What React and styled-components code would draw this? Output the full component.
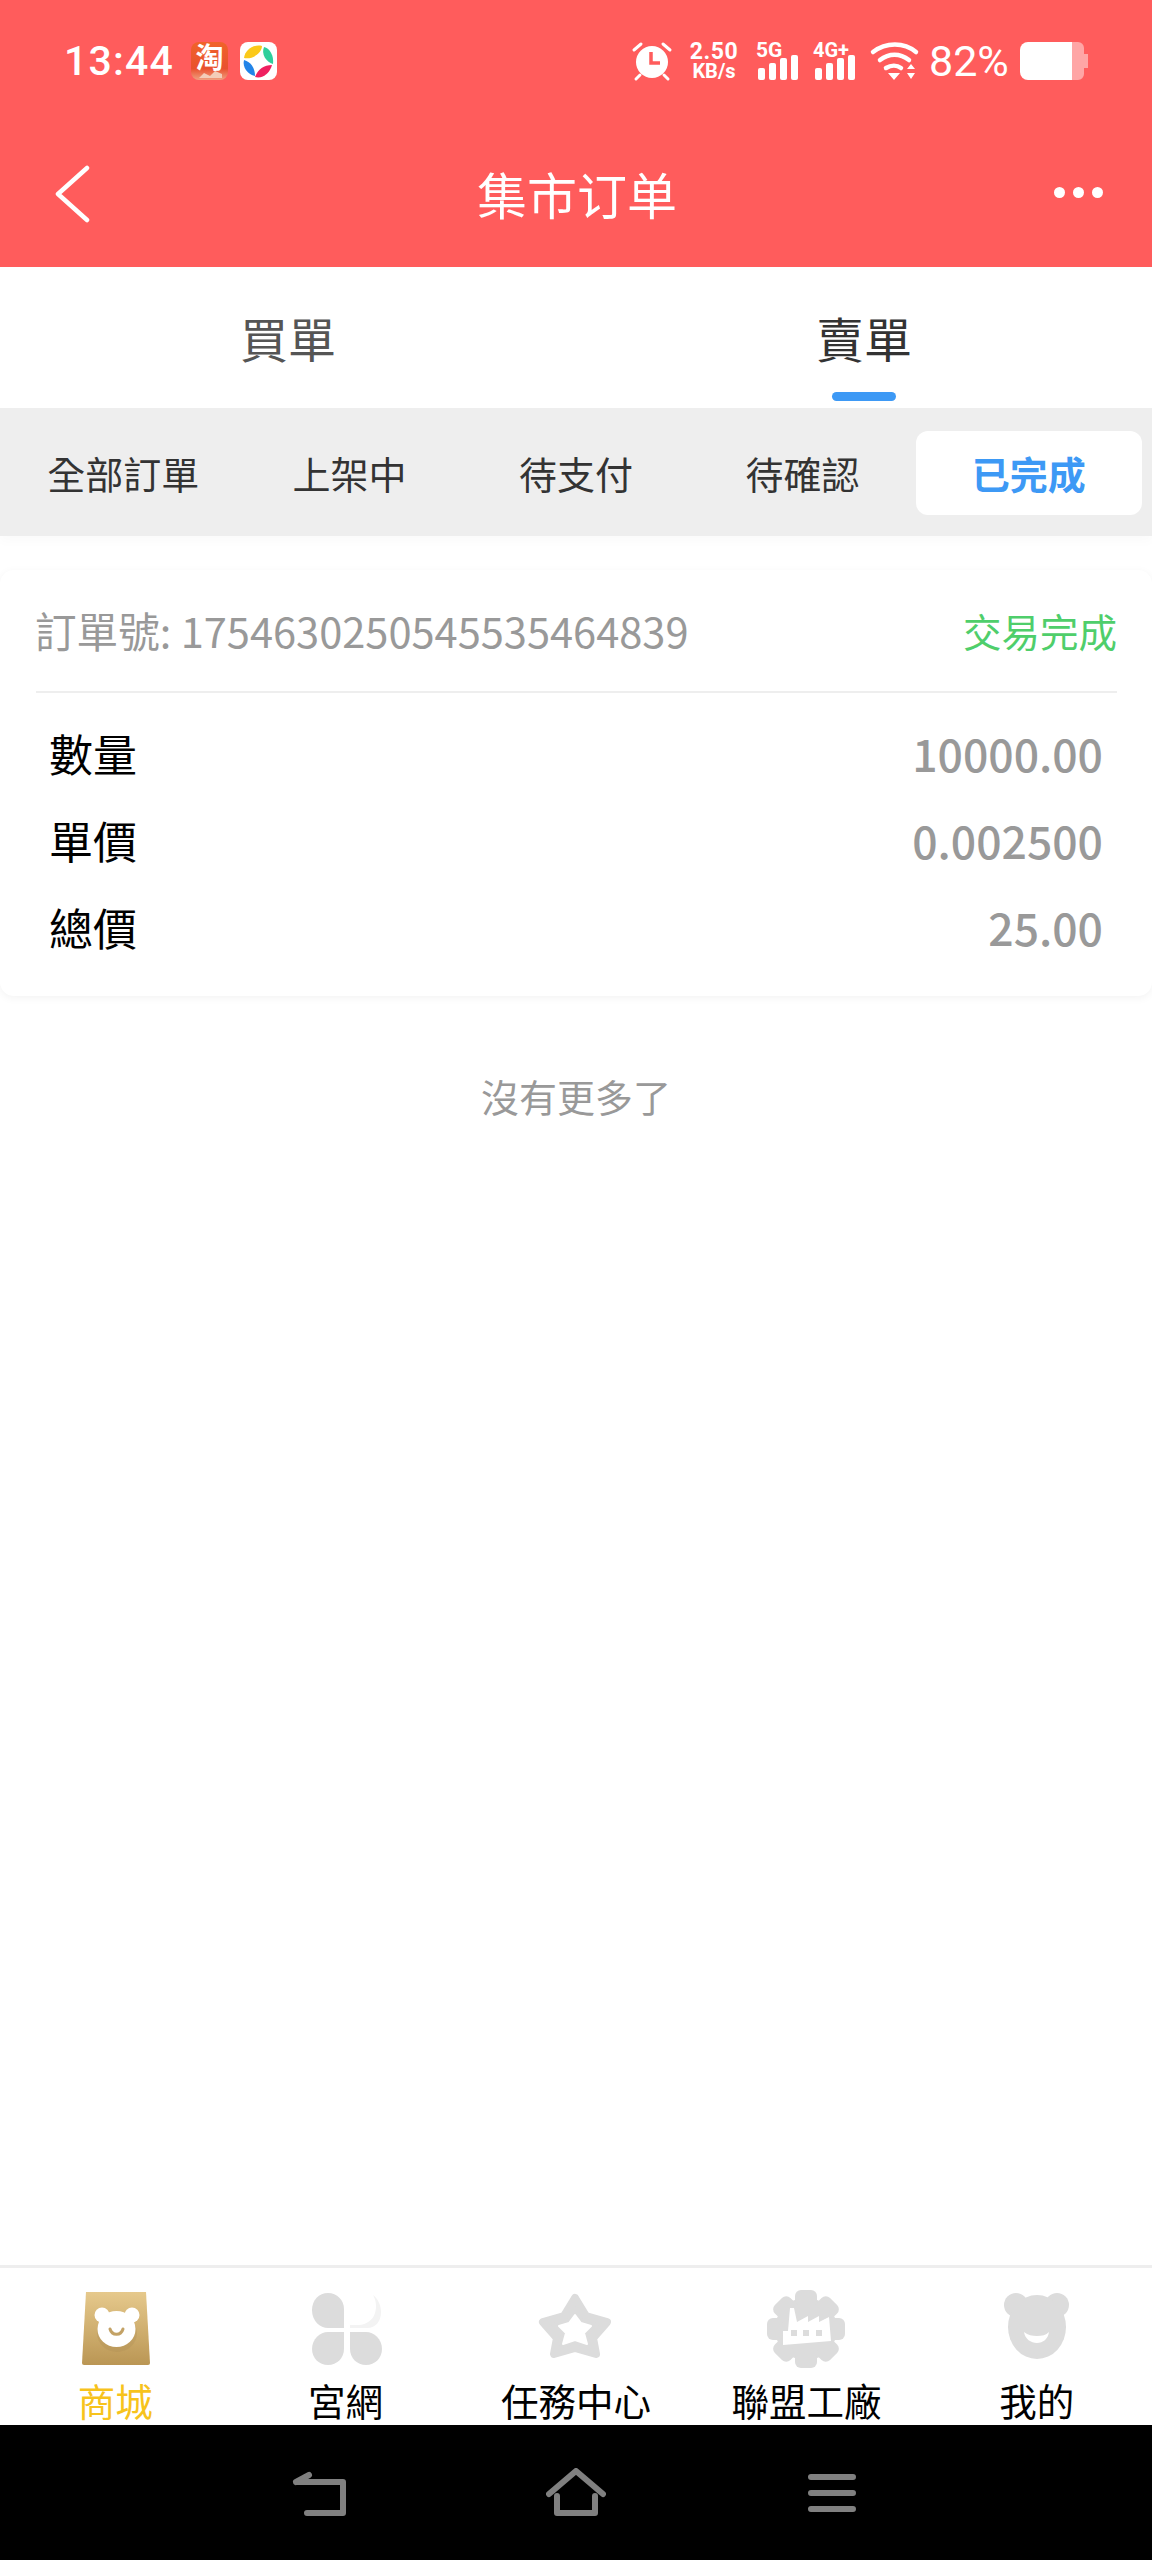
import React from 'react';
import styled, { createGlobalStyle } from 'styled-components';

const GlobalStyle = createGlobalStyle`
    html, body {
        margin: 0;
        padding: 0;
        background: #fff;
    }
    body {
        font-family: "Noto Sans CJK TC", "Noto Sans", sans-serif;
    }
`

const Page = styled.div`
    width: 1152px;
    height: 2560px;
    display: flex;
    flex-direction: column;
    overflow: hidden;
    background: #fff;
`
const Header = styled.header`
    height: 267px;
    background: #ff5c5c;
    color: #fff;
    flex: none;
`
const StatusBar = styled.div`
    height: 123px;
    box-sizing: border-box;
    padding: 42px 64px 0;
    display: flex;
    justify-content: space-between;
    align-items: flex-start;
`
const StatusLeft = styled.div`
    display: flex;
    align-items: center;
    height: 38px;
`
const StatusRight = styled.div`
    display: flex;
    align-items: center;
    height: 38px;
`
const Time = styled.span`
    font-family: Roboto, sans-serif;
    font-size: 41px;
    font-weight: 500;
    line-height: 38px;
    letter-spacing: 1.2px;
    white-space: nowrap;
    margin-right: 17px;
`
const AppIcon = styled.svg`
    width: 37px;
    height: 38px;
    margin-right: ${p => p.$gap || 0}px;
    display: block;
    overflow: visible;
`
const StatusIcon = styled.svg`
    width: ${p => p.$w}px;
    height: 38px;
    margin-left: ${p => p.$ml || 0}px;
    display: block;
    flex: none;
    overflow: visible;
`
const Speed = styled.div`
    width: 50px;
    margin-left: 17px;
    display: flex;
    flex-direction: column;
    align-items: center;
    font-family: Roboto, sans-serif;
    font-weight: 700;
`
const SpeedValue = styled.span`
    font-size: 23px;
    line-height: 21px;
    letter-spacing: 0.5px;
`
const SpeedUnit = styled.span`
    font-size: 20px;
    line-height: 19px;
`
const Battery = styled.span`
    font-family: Roboto, sans-serif;
    font-size: 43px;
    line-height: 38px;
    margin-left: 9px;
    width: 91px;
    white-space: nowrap;
`
const TopBar = styled.div`
    height: 144px;
    display: grid;
    grid-template-columns: 1fr auto 1fr;
    align-items: center;
    padding: 0 49px 0 54px;
`
const BackIcon = styled.svg`
    width: 36px;
    height: 58px;
    display: block;
    margin-top: -3px;
`
const Title = styled.h1`
    margin: -5px 0 0 -3px;
    font-size: 50px;
    font-weight: 400;
    line-height: 60px;
`
const More = styled.div`
    justify-self: end;
    display: flex;
    gap: 8px;
    margin-top: -5px;
`
const Dot = styled.span`
    width: 11px;
    height: 11px;
    border-radius: 50%;
    background: #fff;
`
const MainTabs = styled.div`
    height: 141px;
    flex: none;
    display: grid;
    grid-template-columns: 1fr 1fr;
    background: #fff;
`
const MainTab = styled.div`
    position: relative;
    text-align: center;
    padding-top: 38px;
    font-size: 48px;
    line-height: 64px;
    color: ${p => p.$active ? '#333' : '#555'};
    &::after {
        content: '';
        display: ${p => p.$active ? 'block' : 'none'};
        position: absolute;
        left: 50%;
        bottom: 7px;
        width: 64px;
        height: 9px;
        margin-left: -32px;
        border-radius: 5px;
        background: #3d99f5;
    }
`
const Filters = styled.div`
    height: 128px;
    flex: none;
    box-sizing: border-box;
    padding: 23px 10px 0;
    display: grid;
    grid-template-columns: repeat(5, 1fr);
    align-items: start;
    background: #eee;
    box-shadow: 0 6px 10px rgba(0, 0, 0, 0.02);
    position: relative;
`
const Filter = styled.div`
    height: 84px;
    box-sizing: border-box;
    padding-bottom: 2px;
    border-radius: 12px;
    display: flex;
    align-items: center;
    justify-content: center;
    font-size: 38px;
    font-weight: ${p => p.$active ? 700 : 400};
    color: ${p => p.$active ? '#3d99f5' : '#333'};
    background: ${p => p.$active ? '#fff' : 'transparent'};
`
const OrderCard = styled.section`
    margin-top: 34px;
    height: 426px;
    flex: none;
    border-radius: 14px;
    box-sizing: border-box;
    padding: 0 35px 0 36px;
    background: #fff;
    box-shadow: 0 2px 8px rgba(0, 0, 0, 0.05);
`
const OrderHead = styled.div`
    height: 121px;
    display: flex;
    justify-content: space-between;
    align-items: center;
    border-bottom: 2px solid #eee;
`
const OrderNo = styled.span`
    font-size: 41.6px;
    line-height: 56px;
    margin: -2px 0 0 -1px;
    color: #999;
`
const OrderState = styled.span`
    font-size: 38.5px;
    line-height: 56px;
    margin-top: -2px;
    color: #4fce6b;
`
const OrderRows = styled.div`
    padding: 16px 14px 0 13px;
`
const OrderRow = styled.div`
    height: 87px;
    display: flex;
    justify-content: space-between;
    align-items: center;
`
const RowLabel = styled.span`
    font-size: 44px;
    color: #000;
`
const RowValue = styled.span`
    font-size: 44.5px;
    font-weight: 500;
    color: #999;
`
const NoMore = styled.div`
    margin-top: 75px;
    text-align: center;
    font-size: 38px;
    line-height: 50px;
    color: #999;
`
const TabBar = styled.nav`
    margin-top: auto;
    height: 160px;
    flex: none;
    box-sizing: border-box;
    border-top: 3px solid #eee;
    display: grid;
    grid-template-columns: repeat(5, 1fr);
    background: #fff;
`
const TabItem = styled.div`
    display: flex;
    flex-direction: column;
    align-items: center;
    padding-top: 21px;
`
const TabIcon = styled.svg`
    width: 84px;
    height: 84px;
    display: block;
    flex: none;
`
const TabLabel = styled.span`
    margin-top: 7px;
    font-size: 37.5px;
    line-height: 40px;
    white-space: nowrap;
    color: ${p => p.$active ? '#f7c31c' : '#000'};
`
const NavBar = styled.div`
    height: 135px;
    flex: none;
    background: #000;
    display: flex;
    justify-content: center;
    align-items: center;
    gap: 196px;
`
const NavIcon = styled.svg`
    width: 60px;
    height: 50px;
    display: block;
    fill: none;
    stroke: #808080;
    stroke-width: 6;
    stroke-linecap: round;
    stroke-linejoin: round;
`

const TaobaoIcon = () => (
    <AppIcon $gap={12} viewBox="0 0 37 38">
        <defs>
            <linearGradient id="tb" x1="0" y1="0" x2="0" y2="1">
                <stop offset="0" stopColor="#f0632a" />
                <stop offset="0.7" stopColor="#e9512f" />
                <stop offset="1" stopColor="#f0a080" />
            </linearGradient>
        </defs>
        <rect width="37" height="38" rx="8" fill="url(#tb)" />
        <text x="18.5" y="26" textAnchor="middle" fontSize="28" fontWeight="700" fill="#fff" fontFamily="Noto Sans CJK SC">淘</text>
        <path d="M8 36l5-5 6 3 5-5 7 3v4H8z" fill="#f3cdb8" />
    </AppIcon>
)

const PetalIcon = () => (
    <AppIcon viewBox="0 0 37 38">
        <rect width="37" height="38" rx="8" fill="#fff" />
        <path d="M4 16C5 8 13 2 22 4c0 7-10 14-18 12z" fill="#fbc91a" />
        <path d="M24 5c6 1 10 9 9 17-7-2-12-10-9-17z" fill="#2fcf9c" />
        <path d="M4 18c7 2 11 8 11 16-7-1-13-9-11-16z" fill="#2284e8" />
        <path d="M15 35c3-8 9-12 17-12-2 8-9 14-17 12z" fill="#ef2060" />
    </AppIcon>
)

const Bars = () => (
    <g fill="#fff">
        <rect x="2" y="26" width="7" height="12" rx="2" />
        <rect x="13" y="21" width="7" height="17" rx="2" />
        <rect x="24" y="16" width="7" height="22" rx="2" />
        <rect x="35" y="13" width="7" height="25" rx="2" />
    </g>
)

const tabs = [
    { label: '商城', active: true, icon: (
        <>
            <defs>
                <linearGradient id="bag" x1="0" y1="0" x2="0" y2="1">
                    <stop offset="0" stopColor="#e6c98c" />
                    <stop offset="1" stopColor="#ba9654" />
                </linearGradient>
            </defs>
            <path d="M13 3h60l4 71a2 2 0 0 1-2 2H11a2 2 0 0 1-2-2z" fill="url(#bag)" />
            <ellipse cx="44" cy="44" rx="20" ry="19" fill="#a8894f" fillOpacity="0.25" />
            <circle cx="29" cy="26" r="7.5" fill="#fff" />
            <circle cx="59" cy="26" r="7.5" fill="#fff" />
            <ellipse cx="43.5" cy="40" rx="19" ry="18" fill="#fff" />
            <path d="M37 40c2 7 11 7 13 0" fill="none" stroke="#c3a266" strokeWidth="3" strokeLinecap="round" />
        </>
    ) },
    { label: '宮網', icon: (
        <g fill="#dcdcdc">
            <path d="M24 4c-9 0-16 7-16 17 0 11 8 18 16 18h16V20C40 11 33 4 24 4z" />
            <path d="M24 76c-9 0-16-7-16-16 0-10 8-17 16-17h16v17c0 9-7 16-16 16z" />
            <path d="M62 76c9 0 16-7 16-16 0-10-8-17-16-17H46v17c0 9 7 16 16 16z" />
            <path d="M46 39h17c9 0 14-7 14-16 0-8-4-14-8-17 3 5 4 12 2 18-2 7-8 11-15 12H46z" fill="#f3f3f3" />
        </g>
    ) },
    { label: '任務中心', icon: (
        <>
            <polygon points="41,9 52,27 73,33 59,49 62,65 41,59 20,65 23,49 9,33 30,27" fill="#dcdcdc" stroke="#dcdcdc" strokeWidth="8" strokeLinejoin="round" />
            <polygon points="41,26 47,34 57,37 50,44 53,55 41,51 29,55 32,44 25,37 35,34" fill="#fff" stroke="#fff" strokeWidth="2" strokeLinejoin="round" />
        </>
    ) },
    { label: '聯盟工廠', icon: (
        <>
            <g fill="#dcdcdc">
                <circle cx="42" cy="40" r="31" />
                {[0, 45, 90, 135, 180, 225, 270, 315].map(a => (
                    <rect key={a} x="31" y="1" width="22" height="16" rx="6" transform={`rotate(${a} 42 40)`} />
                ))}
            </g>
            <path fill="#fff" d="M19 56V42h5l2-23h4l3 14 11-6v6l11-6v6l10-5 2 24z" />
            <g fill="#dcdcdc">
                <rect x="27" y="41" width="6" height="6" />
                <rect x="39" y="41" width="6" height="6" />
                <rect x="52" y="41" width="6" height="6" />
            </g>
        </>
    ) },
    { label: '我的', icon: (
        <>
            <circle cx="21" cy="16" r="12" fill="#dcdcdc" />
            <circle cx="62" cy="16" r="12" fill="#dcdcdc" />
            <ellipse cx="42" cy="38" rx="29" ry="32" fill="#dcdcdc" />
            <path d="M29 43c4 3 8 4 13 4s9-1 12-4c-1 7-6 11-12 11s-12-4-13-11z" fill="#fff" />
        </>
    ) }
]

const filters = ['全部訂單', '上架中', '待支付', '待確認', '已完成']

const rows = [
    ['數量', '10000.00'],
    ['單價', '0.002500'],
    ['總價', '25.00']
]

const App = () => (
    <>
        <GlobalStyle />
        <Page>
            <Header>
                <StatusBar>
                    <StatusLeft>
                        <Time>13:44</Time>
                        <TaobaoIcon />
                        <PetalIcon />
                    </StatusLeft>
                    <StatusRight>
                        <StatusIcon $w={40} viewBox="0 0 40 38">
                            <circle cx="20" cy="20" r="16" fill="#fff" />
                            <path d="M2 8l7-6M38 8l-7-6M8 33l-4 4M32 33l4 4" stroke="#fff" strokeWidth="3" strokeLinecap="round" />
                            <path d="M19 10v11h9" fill="none" stroke="#ff5c5c" strokeWidth="3.5" />
                        </StatusIcon>
                        <Speed>
                            <SpeedValue>2.50</SpeedValue>
                            <SpeedUnit>KB/s</SpeedUnit>
                        </Speed>
                        <StatusIcon $w={44} $ml={17} viewBox="0 0 44 38">
                            <text x="0" y="15" fontSize="21" fontWeight="700" fontFamily="Roboto" fill="#fff">5G</text>
                            <Bars />
                        </StatusIcon>
                        <StatusIcon $w={46} $ml={13} viewBox="0 0 46 38">
                            <text x="0" y="15" fontSize="20" fontWeight="700" fontFamily="Roboto" fill="#fff">4G+</text>
                            <Bars />
                        </StatusIcon>
                        <StatusIcon $w={50} $ml={11} viewBox="0 0 50 38">
                            <g fill="none" stroke="#fff" strokeWidth="4.5" strokeLinecap="round">
                                <path d="M3 10c13-10 31-10 43 0" />
                                <path d="M10 18c9-7 20-7 29 0" />
                                <path d="M16 26c5-3 11-3 15 0" />
                            </g>
                            <path d="M18 31h12l-6 7zM37 27l4-5 4 5zM37 31h8l-4 6z" fill="#fff" />
                        </StatusIcon>
                        <Battery>82%</Battery>
                        <StatusIcon $w={68} viewBox="0 0 68 38">
                            <path d="M8 0h44v38H8a8 8 0 0 1-8-8V8a8 8 0 0 1 8-8z" fill="#fff" />
                            <path d="M52 0h6a6 6 0 0 1 6 6v6h4v14h-4v6a6 6 0 0 1-6 6h-6z" fill="#fff" fillOpacity="0.45" />
                        </StatusIcon>
                    </StatusRight>
                </StatusBar>
                <TopBar>
                    <BackIcon viewBox="0 0 36 58">
                        <path d="M33 3L4 29l29 26" fill="none" stroke="#fff" strokeWidth="4.5" strokeLinecap="round" strokeLinejoin="round" />
                    </BackIcon>
                    <Title>集市订单</Title>
                    <More>
                        <Dot />
                        <Dot />
                        <Dot />
                    </More>
                </TopBar>
            </Header>
            <MainTabs>
                <MainTab>買單</MainTab>
                <MainTab $active>賣單</MainTab>
            </MainTabs>
            <Filters>
                {filters.map((name, i) => (
                    <Filter key={name} $active={i === 4}>{name}</Filter>
                ))}
            </Filters>
            <OrderCard>
                <OrderHead>
                    <OrderNo>訂單號: 1754630250545535464839</OrderNo>
                    <OrderState>交易完成</OrderState>
                </OrderHead>
                <OrderRows>
                    {rows.map(([label, value]) => (
                        <OrderRow key={label}>
                            <RowLabel>{label}</RowLabel>
                            <RowValue>{value}</RowValue>
                        </OrderRow>
                    ))}
                </OrderRows>
            </OrderCard>
            <NoMore>沒有更多了</NoMore>
            <TabBar>
                {tabs.map(tab => (
                    <TabItem key={tab.label}>
                        <TabIcon viewBox="0 0 84 84">{tab.icon}</TabIcon>
                        <TabLabel $active={tab.active}>{tab.label}</TabLabel>
                    </TabItem>
                ))}
            </TabBar>
            <NavBar>
                <NavIcon viewBox="0 0 60 50">
                    <path d="M6 14h47v31H17M6 14l13-7" />
                </NavIcon>
                <NavIcon viewBox="0 0 60 50">
                    <path d="M3 26L30 3l27 23M11 28v17h38V28" />
                </NavIcon>
                <NavIcon viewBox="0 0 60 50">
                    <path d="M9 9h42M9 25h42M9 41h42" />
                </NavIcon>
            </NavBar>
        </Page>
    </>
);

export default App;
